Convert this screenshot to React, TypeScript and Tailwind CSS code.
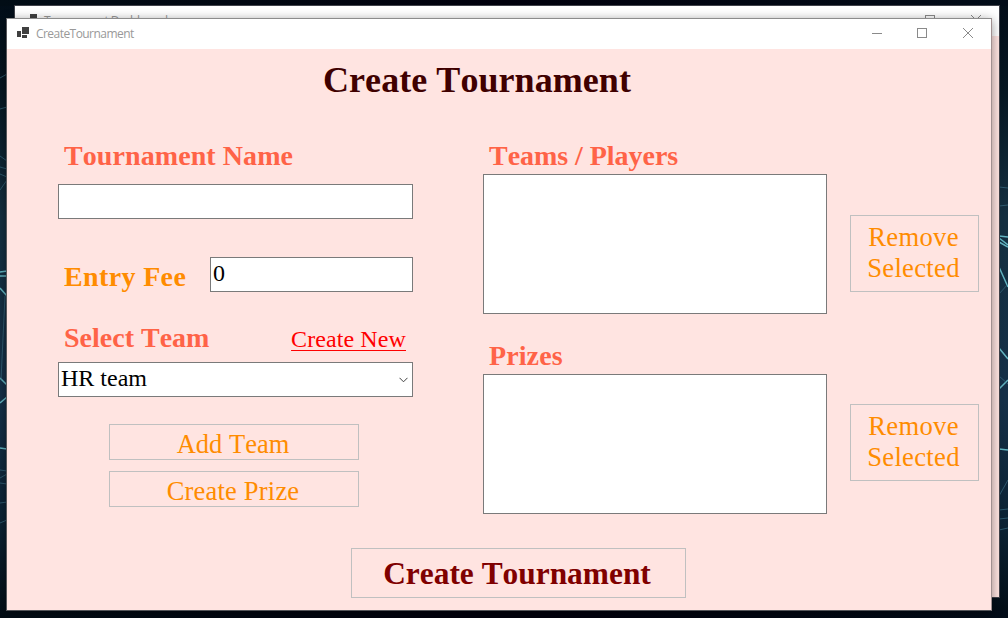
import type { ReactNode } from "react";

function AppIcon() {
  return (
    <svg width="13" height="12" viewBox="0 0 13 12" className="shrink-0" shapeRendering="crispEdges">
      <path fill="#404040" d="M0 4h4v6H0zM5 0h7v7H5zM5 8h5v3H5z" />
    </svg>
  );
}

function CaptionButtons() {
  return (
    <svg width="106" height="12" viewBox="0 0 106 12" className="ml-auto shrink-0" fill="none" stroke="#8a8a8a">
      <path d="M1 6.5h10" shapeRendering="crispEdges" />
      <rect x="46.5" y="1.5" width="9" height="9" shapeRendering="crispEdges" />
      <path d="M92 1l10 10M102 1l-10 10" />
    </svg>
  );
}

function TitleBar({ title }: { title: string }) {
  return (
    <div className="flex h-[30px] items-center bg-white pb-[2px] pl-[10px] pr-[14px]">
      <AppIcon />
      <span className="ml-[6px] mt-[2px] font-['Open_Sans',sans-serif] text-[12px] leading-4 tracking-[-0.55px] text-[#999999]">
        {title}
      </span>
      <CaptionButtons />
    </div>
  );
}

function Label({ children, className = "text-[#ff6347]" }: { children: ReactNode; className?: string }) {
  return <span className={`block whitespace-nowrap pl-[6px] text-[28px] font-bold leading-8 ${className}`}>{children}</span>;
}

function ActionButton({ children, className }: { children: ReactNode; className: string }) {
  return (
    <button type="button" className={`block border border-[#c0c0c0] text-center text-[#ff8c00] ${className}`}>
      {children}
    </button>
  );
}

function Wallpaper() {
  return (
    <svg width="1008" height="618" viewBox="0 0 1008 618" className="block">
      <defs>
        <linearGradient id="night" x1="0" y1="0" x2="0" y2="1">
          <stop offset="0" stopColor="#020d18" />
          <stop offset="0.15" stopColor="#061722" />
          <stop offset="0.35" stopColor="#142f40" />
          <stop offset="0.65" stopColor="#153048" />
          <stop offset="0.85" stopColor="#0b2233" />
          <stop offset="1" stopColor="#020c14" />
        </linearGradient>
        <linearGradient id="edge" x1="0" y1="0" x2="1" y2="0">
          <stop offset="0" stopColor="#020d16" />
          <stop offset="0.5" stopColor="#00000c" />
          <stop offset="1" stopColor="#020c18" />
        </linearGradient>
      </defs>
      <rect width="1008" height="618" fill="url(#night)" />
      <rect width="1008" height="6" fill="url(#edge)" />
      <rect x="8" y="610" width="1000" height="8" fill="url(#edge)" />
      <g stroke="#62b3c0" strokeWidth="1.5" fill="none">
        <path d="M0 272l7-1M0 276h7M0 288l7 8M0 378l7 7M0 403l7-6M0 448l7 1" />
        <path d="M999 236l9 1M999 238l9 7M999 242l9 5M999 267l9 20M999 348l9 11M999 389l9-9M999 449l9 1" />
      </g>
      <g stroke="#3a6c82" strokeWidth="1" fill="none" opacity="0.7">
        <path d="M0 78l7-4M0 109l7-2M0 156l7 5M0 167l7 2M0 174l7 3M0 190l7-10M5 296L1 380M0 470l7 1M0 478l7-4M0 483l7 1M0 503l7-1M0 523l7-3" />
        <path d="M999 187l9 1M999 206l9-1M999 294l9-10M999 376l9 8M999 496l9-16M999 510l9-1M999 519l9-1M999 530l9-2" />
      </g>
    </svg>
  );
}

export default function App() {
  return (
    <main className="relative h-[618px] w-[1008px] overflow-hidden bg-[#020d18] font-['Liberation_Serif',serif] [font-kerning:none]">
      <Wallpaper />

      <section className="absolute left-[14px] top-[5px] h-[593px] w-[986px] border border-[#40424a] bg-[#ffe4e1]">
        <TitleBar title="Tournament Dashboard" />
      </section>

      <section className="absolute left-[6px] top-[18px] h-[593px] w-[986px] border border-[#55565a] border-r-[#a09090] border-t-[#8c8c8c] bg-[#ffe4e1] shadow-[0_2px_10px_0_rgba(0,0,0,0.42)]">
        <TitleBar title="CreateTournament" />
        <div className="flex flex-col pt-[11px]">
          <h1 className="pl-[316px] text-[36px] font-bold leading-10 tracking-[0.06px] text-[#400000]">Create Tournament</h1>

          <div className="mt-10 flex h-[374px] pl-[51px]">
            <div className="w-[355px]">
              <Label className="tracking-[0.08px] text-[#ff6347]">Tournament Name</Label>
              <input aria-label="Tournament Name" className="mt-3 block h-[35px] w-full border border-[#7a7a7a] bg-white px-[2px] text-2xl outline-none" />

              <div className="mt-[38px] flex justify-between">
                <Label className="pt-1 tracking-[0.36px] text-[#ff8c00]">Entry Fee</Label>
                <input
                  aria-label="Entry Fee"
                  defaultValue="0"
                  className="block h-[35px] w-[203px] border border-[#7a7a7a] bg-white pb-[3px] pl-[2px] text-2xl leading-7 text-black outline-none"
                />
              </div>

              <div className="mt-[29px] flex h-8 justify-between pr-[7px]">
                <Label>Select Team</Label>
                <a href="#" className="mt-[3px] block text-2xl leading-7 tracking-[0.1px] text-[#ff0000] underline decoration-1 underline-offset-[3px]">
                  Create New
                </a>
              </div>
              <div className="mt-2 flex h-[35px] items-center justify-between border border-[#7a7a7a] bg-white pl-[2px] pr-[4px]">
                <span className="pb-[3px] text-2xl leading-7 text-black">HR team</span>
                <svg width="9" height="6" viewBox="0 0 9 6" className="mt-px" fill="none" stroke="#404040">
                  <path d="M0.5 0.8l4 4 4-4" />
                </svg>
              </div>

              <ActionButton className="ml-[51px] mt-[27px] h-9 w-[250px] pr-[2px] pt-[3px] text-[26.5px] leading-[30px]">Add Team</ActionButton>
              <ActionButton className="ml-[51px] mt-[11px] h-9 w-[250px] pr-[2px] pt-[3px] text-[26.5px] leading-[30px] tracking-[0.2px]">Create Prize</ActionButton>
            </div>

            <div className="ml-[70px] w-[344px]">
              <Label className="tracking-[-0.04px] text-[#ff6347]">Teams / Players</Label>
              <div className="mt-[2px] h-[140px] border border-[#7a7a7a] bg-white" />
              <div className="mt-[26px]">
                <Label className="tracking-[0.1px] text-[#ff6347]">Prizes</Label>
              </div>
              <div className="mt-[2px] h-[140px] border border-[#7a7a7a] bg-white" />
            </div>

            <div className="ml-[23px] w-[129px] pt-[75px]">
              <ActionButton className="h-[77px] w-full pb-[2px] pr-[2px] text-[26.67px] leading-[31px] tracking-[0.3px]">
                Remove
                <br />
                Selected
              </ActionButton>
              <ActionButton className="mt-[112px] h-[77px] w-full pb-[2px] pr-[2px] text-[26.67px] leading-[31px] tracking-[0.3px]">
                Remove
                <br />
                Selected
              </ActionButton>
            </div>
          </div>

          <button
            type="button"
            className="ml-[344px] mt-[34px] block h-[50px] w-[335px] border border-[#c0c0c0] pr-[3px] pt-[2px] text-[31.4px] font-bold leading-9 text-[#800000]"
          >
            Create Tournament
          </button>
        </div>
      </section>
    </main>
  );
}
